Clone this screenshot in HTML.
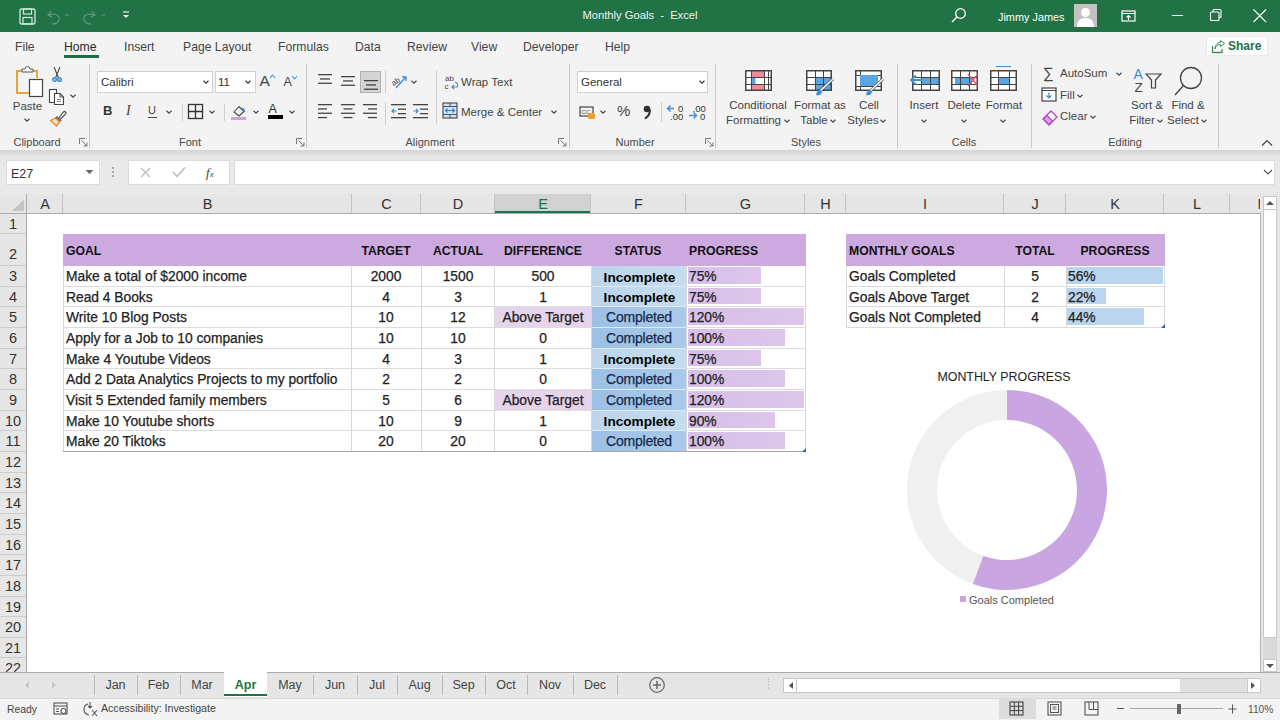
<!DOCTYPE html><html><head><meta charset="utf-8"><style>
*{margin:0;padding:0;box-sizing:border-box}
html,body{width:1280px;height:720px;overflow:hidden;background:#fff}
body{position:relative;font-family:"Liberation Sans",sans-serif}
.t{position:absolute;white-space:nowrap}
.d{-webkit-text-stroke:0.25px currentColor}
.b{position:absolute}

</style></head><body>
<div class="b" style="left:0px;top:0px;width:1280px;height:32px;background:#217346"></div>
<svg class="b" style="left:19px;top:8px;" width="18" height="17" viewBox="0 0 18 17"><rect x="1" y="1" width="15" height="15" rx="1.5" fill="none" stroke="#cfe8d9" stroke-width="1.3"/><rect x="4.5" y="1" width="8" height="5" fill="none" stroke="#cfe8d9" stroke-width="1.2"/><rect x="4" y="9.5" width="9" height="6.5" fill="none" stroke="#cfe8d9" stroke-width="1.2"/></svg>
<svg class="b" style="left:46px;top:8px;" width="30" height="17" viewBox="0 0 30 17"><path d="M5 3 L2 7 L6 9" fill="none" stroke="#5e9a78" stroke-width="1.2"/><path d="M2.5 7 C8 5 14 6 13 12 C12 15 9 16 6 16" fill="none" stroke="#5e9a78" stroke-width="1.2"/><path d="M19 7 L23 7" stroke="#5e9a78" stroke-width="1"/></svg>
<svg class="b" style="left:82px;top:8px;" width="30" height="17" viewBox="0 0 30 17"><path d="M10 3 L13 7 L9 9" fill="none" stroke="#5e9a78" stroke-width="1.2"/><path d="M12.5 7 C7 5 1 6 2 12 C3 15 6 16 9 16" fill="none" stroke="#5e9a78" stroke-width="1.2"/><path d="M19 7 L23 7" stroke="#5e9a78" stroke-width="1"/></svg>
<svg class="b" style="left:121px;top:10px;" width="10" height="10" viewBox="0 0 10 10"><path d="M2 2 H8" stroke="#e8f2ec" stroke-width="1.2"/><path d="M2 5 L5 8 L8 5 Z" fill="#e8f2ec"/></svg>
<div class="t " style="left:540.0px;width:200px;text-align:center;top:8.2px;font-size:11.2px;line-height:14.6px;color:#eef6f0;font-weight:400;">Monthly Goals&nbsp; -&nbsp; Excel</div>
<svg class="b" style="left:950px;top:7px;" width="18" height="17" viewBox="0 0 18 17"><circle cx="10.5" cy="6.5" r="4.8" fill="none" stroke="#fff" stroke-width="1.3"/><path d="M7 10 L2 15" stroke="#fff" stroke-width="1.4"/></svg>
<div class="t " style="left:998px;top:9.9px;font-size:10.9px;line-height:14.2px;color:#fff;font-weight:400;">Jimmy James</div>
<div class="b" style="left:1074px;top:4px;width:23px;height:23px;background:#c2c2c2"></div>
<svg class="b" style="left:1074px;top:4px;" width="23" height="23" viewBox="0 0 23 23"><circle cx="11.5" cy="8.5" r="4.5" fill="#fff"/><path d="M3 23 C3 15 8 14 11.5 14 C15 14 20 15 20 23 Z" fill="#fff"/></svg>
<svg class="b" style="left:1121px;top:9px;" width="16" height="14" viewBox="0 0 16 14"><rect x="1" y="2" width="13" height="10" fill="none" stroke="#fff" stroke-width="1.2"/><path d="M1 4.5 H14" stroke="#fff" stroke-width="1"/><path d="M7.5 11 V6.5 M5.5 8.5 L7.5 6.5 L9.5 8.5" fill="none" stroke="#fff" stroke-width="1.1"/></svg>
<div class="b" style="left:1172px;top:15px;width:11px;height:1.2px;background:#fff"></div>
<svg class="b" style="left:1209px;top:8px;" width="14" height="14" viewBox="0 0 14 14"><rect x="1.5" y="4" width="8.5" height="8.5" rx="1" fill="none" stroke="#fff" stroke-width="1.1"/><path d="M4 4 V2.5 Q4 1.5 5 1.5 H11 Q12 1.5 12 2.5 V8.5 Q12 9.5 11 9.5 H10" fill="none" stroke="#fff" stroke-width="1.1"/></svg>
<svg class="b" style="left:1253px;top:9px;" width="14" height="14" viewBox="0 0 14 14"><path d="M0.5 0.5 L13 13 M13 0.5 L0.5 13" stroke="#fff" stroke-width="1.1"/></svg>
<div class="b" style="left:0px;top:32px;width:1280px;height:118px;background:#f3f3f3"></div>
<div class="t " style="left:15px;top:39.6px;font-size:12.2px;line-height:15.9px;color:#444;font-weight:400;">File</div>
<div class="t " style="left:64px;top:39.6px;font-size:12.2px;line-height:15.9px;color:#262626;font-weight:400;">Home</div>
<div class="t " style="left:124px;top:39.6px;font-size:12.2px;line-height:15.9px;color:#444;font-weight:400;">Insert</div>
<div class="t " style="left:183px;top:39.6px;font-size:12.2px;line-height:15.9px;color:#444;font-weight:400;">Page Layout</div>
<div class="t " style="left:278px;top:39.6px;font-size:12.2px;line-height:15.9px;color:#444;font-weight:400;">Formulas</div>
<div class="t " style="left:355px;top:39.6px;font-size:12.2px;line-height:15.9px;color:#444;font-weight:400;">Data</div>
<div class="t " style="left:407px;top:39.6px;font-size:12.2px;line-height:15.9px;color:#444;font-weight:400;">Review</div>
<div class="t " style="left:471px;top:39.6px;font-size:12.2px;line-height:15.9px;color:#444;font-weight:400;">View</div>
<div class="t " style="left:523px;top:39.6px;font-size:12.2px;line-height:15.9px;color:#444;font-weight:400;">Developer</div>
<div class="t " style="left:605px;top:39.6px;font-size:12.2px;line-height:15.9px;color:#444;font-weight:400;">Help</div>
<div class="b" style="left:64px;top:55px;width:35px;height:3px;background:#1e6e42"></div>
<div class="b" style="left:1206px;top:36px;width:62px;height:20px;background:#fdfdfd;border:1px solid #ebebeb;border-radius:2px"></div>
<svg class="b" style="left:1211px;top:39px;" width="15" height="15" viewBox="0 0 15 15"><path d="M1.5 7 V13.5 H11 V10" fill="none" stroke="#3f8a60" stroke-width="1.3"/><path d="M4 10 C4.5 7 7 5.5 9.5 5.5 V7.5 L13.5 4.5 L9.5 1.5 V3.5 C6 3.5 4 6 4 10" fill="none" stroke="#3f8a60" stroke-width="1"/></svg>
<div class="t " style="left:1228px;top:38.7px;font-size:12px;line-height:15.6px;color:#24704a;font-weight:700;">Share</div>
<div class="b" style="left:89px;top:64px;width:1px;height:84px;background:#c8c8c8"></div>
<div class="b" style="left:306px;top:64px;width:1px;height:84px;background:#c8c8c8"></div>
<div class="b" style="left:569px;top:64px;width:1px;height:84px;background:#c8c8c8"></div>
<div class="b" style="left:715px;top:64px;width:1px;height:84px;background:#c8c8c8"></div>
<div class="b" style="left:897px;top:64px;width:1px;height:84px;background:#c8c8c8"></div>
<div class="b" style="left:1031px;top:64px;width:1px;height:84px;background:#c8c8c8"></div>
<div class="b" style="left:1218px;top:64px;width:1px;height:84px;background:#c8c8c8"></div>
<div class="t " style="left:-13.0px;width:100px;text-align:center;top:135.3px;font-size:11px;line-height:14.3px;color:#4a4a4a;font-weight:400;">Clipboard</div>
<div class="t " style="left:140.0px;width:100px;text-align:center;top:135.3px;font-size:11px;line-height:14.3px;color:#4a4a4a;font-weight:400;">Font</div>
<div class="t " style="left:380.0px;width:100px;text-align:center;top:135.3px;font-size:11px;line-height:14.3px;color:#4a4a4a;font-weight:400;">Alignment</div>
<div class="t " style="left:585.0px;width:100px;text-align:center;top:135.3px;font-size:11px;line-height:14.3px;color:#4a4a4a;font-weight:400;">Number</div>
<div class="t " style="left:756.0px;width:100px;text-align:center;top:135.3px;font-size:11px;line-height:14.3px;color:#4a4a4a;font-weight:400;">Styles</div>
<div class="t " style="left:914.0px;width:100px;text-align:center;top:135.3px;font-size:11px;line-height:14.3px;color:#4a4a4a;font-weight:400;">Cells</div>
<div class="t " style="left:1075.0px;width:100px;text-align:center;top:135.3px;font-size:11px;line-height:14.3px;color:#4a4a4a;font-weight:400;">Editing</div>
<svg class="b" style="left:79px;top:138px;" width="9" height="9" viewBox="0 0 9 9"><path d="M0.5 0.5 H6 M0.5 0.5 V6" stroke="#777" stroke-width="1"/><path d="M2.5 2.5 L8 8 M8 4.5 V8 H4.5" fill="none" stroke="#777" stroke-width="1"/></svg>
<svg class="b" style="left:296px;top:138px;" width="9" height="9" viewBox="0 0 9 9"><path d="M0.5 0.5 H6 M0.5 0.5 V6" stroke="#777" stroke-width="1"/><path d="M2.5 2.5 L8 8 M8 4.5 V8 H4.5" fill="none" stroke="#777" stroke-width="1"/></svg>
<svg class="b" style="left:558px;top:138px;" width="9" height="9" viewBox="0 0 9 9"><path d="M0.5 0.5 H6 M0.5 0.5 V6" stroke="#777" stroke-width="1"/><path d="M2.5 2.5 L8 8 M8 4.5 V8 H4.5" fill="none" stroke="#777" stroke-width="1"/></svg>
<svg class="b" style="left:705px;top:138px;" width="9" height="9" viewBox="0 0 9 9"><path d="M0.5 0.5 H6 M0.5 0.5 V6" stroke="#777" stroke-width="1"/><path d="M2.5 2.5 L8 8 M8 4.5 V8 H4.5" fill="none" stroke="#777" stroke-width="1"/></svg>
<svg class="b" style="left:1261px;top:139px;" width="12" height="8" viewBox="0 0 12 8"><path d="M1 6.5 L6 1.5 L11 6.5" fill="none" stroke="#444" stroke-width="1.2"/></svg>
<svg class="b" style="left:14px;top:66px;" width="30" height="32" viewBox="0 0 30 32"><path d="M3 5 H9 M19 5 H23 V12" fill="none" stroke="#e8a33d" stroke-width="2"/><path d="M3 4 V27 H15" fill="none" stroke="#e8a33d" stroke-width="2"/><path d="M8 6 V3 H11 Q11 0.5 13.5 0.5 Q16 0.5 16 3 H19 V6 Z" fill="#fff" stroke="#555" stroke-width="1"/><rect x="15.5" y="13.5" width="13" height="17" fill="#fff" stroke="#444" stroke-width="1.2"/></svg>
<div class="t " style="left:-2.5px;width:60px;text-align:center;top:99.0px;font-size:11.5px;line-height:15.0px;color:#444;font-weight:400;">Paste</div>
<svg class="b" style="left:23px;top:117px;" width="8" height="6" viewBox="0 0 8 6"><path d="M1.5 1.75 L4 4.25 L6.5 1.75" fill="none" stroke="#444" stroke-width="1.1"/></svg>
<svg class="b" style="left:50px;top:66px;" width="14" height="17" viewBox="0 0 14 17"><path d="M4 1 L8.5 12 M10 1 L5.5 12" stroke="#444" stroke-width="1.1"/><circle cx="4.5" cy="13.5" r="1.9" fill="#9cc8ec" stroke="#3a8fd6" stroke-width="1.3"/><circle cx="9.5" cy="13.5" r="1.9" fill="#9cc8ec" stroke="#3a8fd6" stroke-width="1.3"/></svg>
<svg class="b" style="left:48px;top:88px;" width="18" height="18" viewBox="0 0 18 18"><rect x="1.5" y="1.5" width="7" height="13" fill="#fff" stroke="#444" stroke-width="1.1"/><path d="M6.5 5.5 H12 L15.5 9 V16.5 H6.5 Z" fill="#fff" stroke="#444" stroke-width="1.1"/><path d="M12 5.5 V9 H15.5" fill="none" stroke="#444" stroke-width="0.9"/><path d="M9 11.5 H13 M9 13.5 H13" stroke="#777" stroke-width="0.9"/></svg>
<svg class="b" style="left:69px;top:93px;" width="8" height="6" viewBox="0 0 8 6"><path d="M1.5 1.75 L4 4.25 L6.5 1.75" fill="none" stroke="#444" stroke-width="1.1"/></svg>
<svg class="b" style="left:49px;top:109px;" width="18" height="18" viewBox="0 0 18 18"><path d="M9.5 9.5 L14.5 3 Q15.5 2 16.5 3 Q17.5 4 16.5 5 L11 10.5" fill="#fff" stroke="#555" stroke-width="1.2"/><path d="M8 7.5 L12 11.5 L10.5 13 L6.5 9 Z" fill="#777" stroke="#555" stroke-width="1"/><path d="M1.5 11.5 L6.5 9 L10.5 13 L7.5 17 Z" fill="#fbe2b8" stroke="#e8872a" stroke-width="1.3"/></svg>
<div class="b" style="left:97px;top:71px;width:116px;height:22px;background:#fff;border:1px solid #d0d0d0"></div>
<div class="t " style="left:101px;top:74.5px;font-size:11.5px;line-height:15.0px;color:#333;font-weight:400;">Calibri</div>
<svg class="b" style="left:202px;top:79px;" width="8" height="6" viewBox="0 0 8 6"><path d="M1.5 1.75 L4 4.25 L6.5 1.75" fill="none" stroke="#333" stroke-width="1.1"/></svg>
<div class="b" style="left:215px;top:71px;width:41px;height:22px;background:#fff;border:1px solid #d0d0d0"></div>
<div class="t " style="left:218px;top:74.5px;font-size:11.5px;line-height:15.0px;color:#333;font-weight:400;">11</div>
<svg class="b" style="left:244px;top:79px;" width="8" height="6" viewBox="0 0 8 6"><path d="M1.5 1.75 L4 4.25 L6.5 1.75" fill="none" stroke="#333" stroke-width="1.1"/></svg>
<div class="t " style="left:259.5px;top:70.9px;font-size:15.5px;line-height:20.2px;color:#444;font-weight:400;">A</div>
<svg class="b" style="left:269px;top:74px;" width="7" height="5" viewBox="0 0 7 5"><path d="M1 4 L3.5 1 L6 4" fill="none" stroke="#3a8fd6" stroke-width="1.1"/></svg>
<div class="t " style="left:283.5px;top:74.4px;font-size:12.5px;line-height:16.2px;color:#444;font-weight:400;">A</div>
<svg class="b" style="left:291px;top:75px;" width="7" height="5" viewBox="0 0 7 5"><path d="M1 1 L3.5 4 L6 1" fill="none" stroke="#3a8fd6" stroke-width="1.1"/></svg>
<div class="t " style="left:103px;top:102.5px;font-size:13px;line-height:16.9px;color:#333;font-weight:700;">B</div>
<div class="t " style="left:126px;top:101.9px;font-size:14px;line-height:18.2px;color:#444;font-weight:400;font-family:'Liberation Serif'"><i>I</i></div>
<div class="t " style="left:148px;top:103.3px;font-size:11px;line-height:14.3px;color:#444;font-weight:400;">U</div>
<div class="b" style="left:148px;top:117px;width:9px;height:1px;background:#444"></div>
<svg class="b" style="left:165px;top:109px;" width="8" height="6" viewBox="0 0 8 6"><path d="M1.5 1.75 L4 4.25 L6.5 1.75" fill="none" stroke="#444" stroke-width="1.1"/></svg>
<div class="b" style="left:182px;top:104px;width:1px;height:17px;background:#d0d0d0"></div>
<svg class="b" style="left:187px;top:103px;" width="17" height="17" viewBox="0 0 17 17"><rect x="1.5" y="1.5" width="14" height="14" fill="none" stroke="#333" stroke-width="1.3"/><path d="M8.5 1.5 V15.5 M1.5 8.5 H15.5" stroke="#333" stroke-width="1.3"/></svg>
<svg class="b" style="left:208px;top:109px;" width="8" height="6" viewBox="0 0 8 6"><path d="M1.5 1.75 L4 4.25 L6.5 1.75" fill="none" stroke="#444" stroke-width="1.1"/></svg>
<div class="b" style="left:224px;top:104px;width:1px;height:17px;background:#d0d0d0"></div>
<svg class="b" style="left:230px;top:103px;" width="18" height="18" viewBox="0 0 18 18"><path d="M4 9 L9 3.5 L14 8.5 L9 13 Z" fill="none" stroke="#444" stroke-width="1.1"/><path d="M12 5 Q15 6 14 9" fill="none" stroke="#3a8fd6" stroke-width="1.3"/><rect x="1" y="14" width="15" height="3" fill="#c9a5e0"/></svg>
<svg class="b" style="left:252px;top:109px;" width="8" height="6" viewBox="0 0 8 6"><path d="M1.5 1.75 L4 4.25 L6.5 1.75" fill="none" stroke="#444" stroke-width="1.1"/></svg>
<div class="t " style="left:268.5px;top:101.4px;font-size:12.5px;line-height:16.2px;color:#333;font-weight:400;">A</div>
<div class="b" style="left:268px;top:115px;width:15px;height:3.5px;background:#000"></div>
<svg class="b" style="left:288px;top:109px;" width="8" height="6" viewBox="0 0 8 6"><path d="M1.5 1.75 L4 4.25 L6.5 1.75" fill="none" stroke="#444" stroke-width="1.1"/></svg>
<svg class="b" style="left:318px;top:74px;" width="14" height="14" viewBox="0 0 14 14"><rect x="0.0" y="0.0" width="14" height="1.3" fill="#444"/><rect x="2.0" y="4.3" width="10" height="1.3" fill="#444"/><rect x="0.0" y="8.6" width="14" height="1.3" fill="#444"/></svg>
<svg class="b" style="left:341px;top:76px;" width="14" height="14" viewBox="0 0 14 14"><rect x="0.0" y="0.0" width="14" height="1.3" fill="#444"/><rect x="2.0" y="4.3" width="10" height="1.3" fill="#444"/><rect x="0.0" y="8.6" width="14" height="1.3" fill="#444"/></svg>
<div class="b" style="left:360px;top:71px;width:21px;height:22px;background:#d4d4d4;border:1px solid #b0b0b0"></div>
<svg class="b" style="left:364px;top:80px;" width="14" height="14" viewBox="0 0 14 14"><rect x="0.0" y="0.0" width="14" height="1.3" fill="#444"/><rect x="2.0" y="4.3" width="10" height="1.3" fill="#444"/><rect x="0.0" y="8.6" width="14" height="1.3" fill="#444"/></svg>
<div class="b" style="left:385px;top:70px;width:1px;height:23px;background:#d0d0d0"></div>
<svg class="b" style="left:390px;top:73px;" width="20" height="17" viewBox="0 0 20 17"><text x="1" y="11" font-size="8" font-family="Liberation Sans" fill="#444" transform="rotate(-35 6 8)">ab</text><path d="M6 15 L16 4 M12 4 H16 V8" fill="none" stroke="#3a8fd6" stroke-width="1.3"/></svg>
<svg class="b" style="left:410px;top:79px;" width="8" height="6" viewBox="0 0 8 6"><path d="M1.5 1.75 L4 4.25 L6.5 1.75" fill="none" stroke="#444" stroke-width="1.1"/></svg>
<div class="b" style="left:436px;top:70px;width:1px;height:54px;background:#d0d0d0"></div>
<svg class="b" style="left:444px;top:73px;" width="17" height="17" viewBox="0 0 17 17"><text x="1" y="8" font-size="8" font-family="Liberation Sans" fill="#444">ab</text><text x="0.5" y="16" font-size="8" font-family="Liberation Sans" fill="#444">c</text><path d="M11 9 Q15 10 13 14 L8 14 M10 12 L8 14 L10 16" fill="none" stroke="#3a8fd6" stroke-width="1.2"/></svg>
<div class="t " style="left:461px;top:74.5px;font-size:11.5px;line-height:15.0px;color:#444;font-weight:400;">Wrap Text</div>
<svg class="b" style="left:318px;top:104px;" width="14" height="19" viewBox="0 0 14 19"><rect x="0" y="0.0" width="14" height="1.3" fill="#444"/><rect x="0" y="4.3" width="9" height="1.3" fill="#444"/><rect x="0" y="8.6" width="14" height="1.3" fill="#444"/><rect x="0" y="12.899999999999999" width="9" height="1.3" fill="#444"/></svg>
<svg class="b" style="left:341px;top:104px;" width="14" height="19" viewBox="0 0 14 19"><rect x="0.0" y="0.0" width="14" height="1.3" fill="#444"/><rect x="2.5" y="4.3" width="9" height="1.3" fill="#444"/><rect x="0.0" y="8.6" width="14" height="1.3" fill="#444"/><rect x="2.5" y="12.899999999999999" width="9" height="1.3" fill="#444"/></svg>
<svg class="b" style="left:363px;top:104px;" width="14" height="19" viewBox="0 0 14 19"><rect x="0" y="0.0" width="14" height="1.3" fill="#444"/><rect x="5" y="4.3" width="9" height="1.3" fill="#444"/><rect x="0" y="8.6" width="14" height="1.3" fill="#444"/><rect x="5" y="12.899999999999999" width="9" height="1.3" fill="#444"/></svg>
<div class="b" style="left:385px;top:102px;width:1px;height:23px;background:#d0d0d0"></div>
<svg class="b" style="left:391px;top:103px;" width="16" height="16" viewBox="0 0 16 16"><rect x="0" y="1" width="15" height="1.3" fill="#444"/><rect x="7" y="5.5" width="8" height="1.3" fill="#444"/><rect x="7" y="10" width="8" height="1.3" fill="#444"/><rect x="0" y="14" width="15" height="1.3" fill="#444"/><path d="M5.5 8 H1 M3 6 L1 8 L3 10" fill="none" stroke="#3a8fd6" stroke-width="1.2"/></svg>
<svg class="b" style="left:413px;top:103px;" width="16" height="16" viewBox="0 0 16 16"><rect x="0" y="1" width="15" height="1.3" fill="#444"/><rect x="7" y="5.5" width="8" height="1.3" fill="#444"/><rect x="7" y="10" width="8" height="1.3" fill="#444"/><rect x="0" y="14" width="15" height="1.3" fill="#444"/><path d="M0.5 8 H5 M3 6 L5 8 L3 10" fill="none" stroke="#3a8fd6" stroke-width="1.2"/></svg>
<svg class="b" style="left:442px;top:102px;" width="17" height="17" viewBox="0 0 17 17"><rect x="1" y="1" width="14" height="15" fill="#cfe3f6" stroke="#444" stroke-width="1.1"/><path d="M1 4.5 H15 M1 12.5 H15 M8 1 V4.5 M8 12.5 V16" stroke="#444" stroke-width="0.9"/><path d="M3.5 8.5 H12.5 M5.5 6.5 L3.5 8.5 L5.5 10.5 M10.5 6.5 L12.5 8.5 L10.5 10.5" fill="none" stroke="#2a7fd0" stroke-width="1.1"/></svg>
<div class="t " style="left:461px;top:104.5px;font-size:11.5px;line-height:15.0px;color:#444;font-weight:400;">Merge &amp; Center</div>
<svg class="b" style="left:550px;top:109px;" width="8" height="6" viewBox="0 0 8 6"><path d="M1.5 1.75 L4 4.25 L6.5 1.75" fill="none" stroke="#444" stroke-width="1.1"/></svg>
<div class="b" style="left:577px;top:71px;width:131px;height:22px;background:#fff;border:1px solid #d0d0d0"></div>
<div class="t " style="left:581px;top:74.5px;font-size:11.5px;line-height:15.0px;color:#333;font-weight:400;">General</div>
<svg class="b" style="left:698px;top:79px;" width="8" height="6" viewBox="0 0 8 6"><path d="M1.5 1.75 L4 4.25 L6.5 1.75" fill="none" stroke="#333" stroke-width="1.1"/></svg>
<svg class="b" style="left:579px;top:105px;" width="18" height="15" viewBox="0 0 18 15"><rect x="1" y="2" width="13" height="9" fill="none" stroke="#444" stroke-width="1.2"/><text x="2.5" y="9" font-size="6" font-family="Liberation Sans" fill="#444">CC</text><rect x="9" y="8" width="7" height="6" rx="1" fill="#f0a030"/></svg>
<svg class="b" style="left:599px;top:109px;" width="8" height="6" viewBox="0 0 8 6"><path d="M1.5 1.75 L4 4.25 L6.5 1.75" fill="none" stroke="#444" stroke-width="1.1"/></svg>
<div class="t " style="left:617px;top:101.2px;font-size:15px;line-height:19.5px;color:#444;font-weight:400;">%</div>
<svg class="b" style="left:642px;top:104px;" width="11" height="16" viewBox="0 0 11 16"><circle cx="5" cy="5" r="3.3" fill="#333"/><path d="M7.8 5.5 Q8.5 11 3 14.5" fill="none" stroke="#333" stroke-width="2.2"/></svg>
<div class="b" style="left:661px;top:102px;width:1px;height:20px;background:#d0d0d0"></div>
<svg class="b" style="left:666px;top:103px;" width="20" height="18" viewBox="0 0 20 18"><path d="M8 5.5 H1.5 M4.5 2.5 L1.5 5.5 L4.5 8.5" fill="none" stroke="#3a8fd6" stroke-width="1.4"/><text x="12" y="9" font-size="9.5" font-family="Liberation Sans" fill="#333">0</text><text x="4" y="17" font-size="9.5" font-family="Liberation Sans" fill="#333">.00</text></svg>
<svg class="b" style="left:688px;top:103px;" width="20" height="18" viewBox="0 0 20 18"><text x="4.5" y="9" font-size="9.5" font-family="Liberation Sans" fill="#333">.00</text><path d="M1 12.5 H8.5 M5.5 9.5 L8.5 12.5 L5.5 15.5" fill="none" stroke="#3a8fd6" stroke-width="1.4"/><text x="12" y="17" font-size="9.5" font-family="Liberation Sans" fill="#333">0</text></svg>
<svg class="b" style="left:745px;top:70px;" width="27" height="21" viewBox="0 0 27 21"><rect x="0.6" y="0.6" width="25.8" height="19.8" fill="#fff"/><rect x="6" y="0.6" width="13" height="6.4" fill="#f08a96"/><rect x="6" y="7" width="4.5" height="7" fill="#5aa5e6"/><rect x="6" y="14" width="13" height="6.4" fill="#f08a96"/><path d="M6.5 0.5 V20.5" stroke="#444" stroke-width="1"/><path d="M19.5 0.5 V20.5" stroke="#444" stroke-width="1"/><path d="M23.5 0.5 V20.5" stroke="#444" stroke-width="1"/><path d="M0.5 7.5 H26.5" stroke="#444" stroke-width="1"/><path d="M0.5 14.5 H26.5" stroke="#444" stroke-width="1"/><rect x="0.75" y="0.75" width="25.5" height="19.5" fill="none" stroke="#444" stroke-width="1.5"/></svg>
<div class="t " style="left:708.0px;width:100px;text-align:center;top:97.5px;font-size:11.5px;line-height:15.0px;color:#444;font-weight:400;">Conditional</div>
<div class="t " style="left:703.5px;width:100px;text-align:center;top:112.5px;font-size:11.5px;line-height:15.0px;color:#444;font-weight:400;">Formatting</div>
<svg class="b" style="left:783px;top:118px;" width="8" height="6" viewBox="0 0 8 6"><path d="M1.5 1.75 L4 4.25 L6.5 1.75" fill="none" stroke="#444" stroke-width="1.1"/></svg>
<svg class="b" style="left:806px;top:70px;" width="26" height="21" viewBox="0 0 26 21"><rect x="0.6" y="0.6" width="24.8" height="19.8" fill="#fff"/><rect x="9" y="7" width="16" height="13" fill="#5aa5e6"/><path d="M9.5 0.5 V20.5" stroke="#444" stroke-width="1"/><path d="M17.5 0.5 V20.5" stroke="#444" stroke-width="1"/><path d="M0.5 7.5 H25.5" stroke="#444" stroke-width="1"/><path d="M0.5 14.5 H25.5" stroke="#444" stroke-width="1"/><rect x="0.75" y="0.75" width="24.5" height="19.5" fill="none" stroke="#444" stroke-width="1.5"/></svg>
<svg class="b" style="left:816px;top:77px;" width="20" height="19" viewBox="0 0 20 19"><path d="M3 15 L17 2" stroke="#555" stroke-width="3"/><path d="M3 15 L17 2" stroke="#fff" stroke-width="1.6"/><path d="M0 18 Q1 13 4 13 Q7 14 5 17 Q3 19 0 18 Z" fill="#3a8fd6"/></svg>
<div class="t " style="left:770.0px;width:100px;text-align:center;top:97.5px;font-size:11.5px;line-height:15.0px;color:#444;font-weight:400;">Format as</div>
<div class="t " style="left:784.0px;width:60px;text-align:center;top:112.5px;font-size:11.5px;line-height:15.0px;color:#444;font-weight:400;">Table</div>
<svg class="b" style="left:829px;top:118px;" width="8" height="6" viewBox="0 0 8 6"><path d="M1.5 1.75 L4 4.25 L6.5 1.75" fill="none" stroke="#444" stroke-width="1.1"/></svg>
<svg class="b" style="left:855px;top:70px;" width="27" height="21" viewBox="0 0 27 21"><rect x="0.6" y="0.6" width="25.8" height="19.8" fill="#fff"/><path d="M5.5 0.5 V20.5" stroke="#444" stroke-width="1"/><path d="M0.5 5.5 H26.5" stroke="#444" stroke-width="1"/><path d="M0.5 16.5 H26.5" stroke="#444" stroke-width="1"/><rect x="0.75" y="0.75" width="25.5" height="19.5" fill="none" stroke="#444" stroke-width="1.5"/></svg>
<div class="b" style="left:860px;top:75px;width:18px;height:11px;background:#5aa5e6"></div>
<svg class="b" style="left:866px;top:77px;" width="20" height="19" viewBox="0 0 20 19"><path d="M3 15 L17 2" stroke="#555" stroke-width="3"/><path d="M3 15 L17 2" stroke="#fff" stroke-width="1.6"/><path d="M0 18 Q1 13 4 13 Q7 14 5 17 Q3 19 0 18 Z" fill="#3a8fd6"/></svg>
<div class="t " style="left:839.0px;width:60px;text-align:center;top:97.5px;font-size:11.5px;line-height:15.0px;color:#444;font-weight:400;">Cell</div>
<div class="t " style="left:833.0px;width:60px;text-align:center;top:112.5px;font-size:11.5px;line-height:15.0px;color:#444;font-weight:400;">Styles</div>
<svg class="b" style="left:879px;top:118px;" width="8" height="6" viewBox="0 0 8 6"><path d="M1.5 1.75 L4 4.25 L6.5 1.75" fill="none" stroke="#444" stroke-width="1.1"/></svg>
<svg class="b" style="left:912px;top:70px;" width="28" height="21" viewBox="0 0 28 21"><rect x="0.6" y="0.6" width="26.8" height="19.8" fill="#fff"/><rect x="9" y="7" width="19" height="7" fill="#5aa5e6"/><path d="M9.5 0.5 V20.5" stroke="#444" stroke-width="1"/><path d="M18.5 0.5 V20.5" stroke="#444" stroke-width="1"/><path d="M0.5 7.5 H27.5" stroke="#444" stroke-width="1"/><path d="M0.5 14.5 H27.5" stroke="#444" stroke-width="1"/><rect x="0.75" y="0.75" width="26.5" height="19.5" fill="none" stroke="#444" stroke-width="1.5"/></svg>
<svg class="b" style="left:909px;top:73px;" width="15" height="14" viewBox="0 0 15 14"><path d="M13 7 H3 M7 2.5 L2 7 L7 11.5" fill="none" stroke="#3a8fd6" stroke-width="1.8"/></svg>
<div class="t " style="left:894.0px;width:60px;text-align:center;top:97.5px;font-size:11.5px;line-height:15.0px;color:#444;font-weight:400;">Insert</div>
<svg class="b" style="left:920px;top:118px;" width="8" height="6" viewBox="0 0 8 6"><path d="M1.5 1.75 L4 4.25 L6.5 1.75" fill="none" stroke="#444" stroke-width="1.1"/></svg>
<svg class="b" style="left:951px;top:70px;" width="27" height="21" viewBox="0 0 27 21"><rect x="0.6" y="0.6" width="25.8" height="19.8" fill="#fff"/><rect x="4" y="7" width="17" height="7" fill="#5aa5e6"/><path d="M9.5 0.5 V20.5" stroke="#444" stroke-width="1"/><path d="M18.5 0.5 V20.5" stroke="#444" stroke-width="1"/><path d="M0.5 7.5 H26.5" stroke="#444" stroke-width="1"/><path d="M0.5 14.5 H26.5" stroke="#444" stroke-width="1"/><rect x="0.75" y="0.75" width="25.5" height="19.5" fill="none" stroke="#444" stroke-width="1.5"/></svg>
<svg class="b" style="left:966px;top:72px;" width="14" height="17" viewBox="0 0 14 17"><path d="M2 2 L12 14 M12 2 L2 14" stroke="#e0505a" stroke-width="1.3"/></svg>
<div class="t " style="left:934.0px;width:60px;text-align:center;top:97.5px;font-size:11.5px;line-height:15.0px;color:#444;font-weight:400;">Delete</div>
<svg class="b" style="left:960px;top:118px;" width="8" height="6" viewBox="0 0 8 6"><path d="M1.5 1.75 L4 4.25 L6.5 1.75" fill="none" stroke="#444" stroke-width="1.1"/></svg>
<svg class="b" style="left:990px;top:70px;" width="27" height="21" viewBox="0 0 27 21"><rect x="0.6" y="0.6" width="25.8" height="19.8" fill="#fff"/><rect x="8" y="7" width="11" height="7" fill="#5aa5e6"/><path d="M8.5 0.5 V20.5" stroke="#444" stroke-width="1"/><path d="M19.5 0.5 V20.5" stroke="#444" stroke-width="1"/><path d="M0.5 7.5 H26.5" stroke="#444" stroke-width="1"/><path d="M0.5 14.5 H26.5" stroke="#444" stroke-width="1"/><rect x="0.75" y="0.75" width="25.5" height="19.5" fill="none" stroke="#444" stroke-width="1.5"/></svg>
<div class="b" style="left:996px;top:66px;width:15px;height:1.3px;background:#3a8fd6"></div>
<div class="t " style="left:974.0px;width:60px;text-align:center;top:97.5px;font-size:11.5px;line-height:15.0px;color:#444;font-weight:400;">Format</div>
<svg class="b" style="left:999px;top:118px;" width="8" height="6" viewBox="0 0 8 6"><path d="M1.5 1.75 L4 4.25 L6.5 1.75" fill="none" stroke="#444" stroke-width="1.1"/></svg>
<div class="t " style="left:1043px;top:63.2px;font-size:15px;line-height:19.5px;color:#444;font-weight:400;">&#x2211;</div>
<div class="t " style="left:1060px;top:65.5px;font-size:11.5px;line-height:15.0px;color:#444;font-weight:400;">AutoSum</div>
<svg class="b" style="left:1115px;top:71px;" width="8" height="6" viewBox="0 0 8 6"><path d="M1.5 1.75 L4 4.25 L6.5 1.75" fill="none" stroke="#444" stroke-width="1.1"/></svg>
<svg class="b" style="left:1041px;top:87px;" width="17" height="16" viewBox="0 0 17 16"><rect x="1" y="1" width="14" height="13" fill="#fff" stroke="#444" stroke-width="1.2"/><path d="M1 3.5 H15" stroke="#444" stroke-width="1"/><path d="M8 5.5 V11 M5.5 8.5 L8 11 L10.5 8.5" fill="none" stroke="#3a8fd6" stroke-width="1.2"/></svg>
<div class="t " style="left:1060px;top:87.5px;font-size:11.5px;line-height:15.0px;color:#444;font-weight:400;">Fill</div>
<svg class="b" style="left:1076px;top:93px;" width="8" height="6" viewBox="0 0 8 6"><path d="M1.5 1.75 L4 4.25 L6.5 1.75" fill="none" stroke="#444" stroke-width="1.1"/></svg>
<svg class="b" style="left:1041px;top:108px;" width="18" height="18" viewBox="0 0 18 18"><path d="M2 11 L10 3 L16 9 L8 17 Z" fill="none" stroke="#b548c6" stroke-width="1.3"/><path d="M2.5 11 L6 7.5 L11.5 13 L8 16.5 Z" fill="#e0a0ea" stroke="#b548c6" stroke-width="1.1"/></svg>
<div class="t " style="left:1060px;top:108.5px;font-size:11.5px;line-height:15.0px;color:#444;font-weight:400;">Clear</div>
<svg class="b" style="left:1089px;top:114px;" width="8" height="6" viewBox="0 0 8 6"><path d="M1.5 1.75 L4 4.25 L6.5 1.75" fill="none" stroke="#444" stroke-width="1.1"/></svg>
<div class="t " style="left:1133.5px;top:64.9px;font-size:14px;line-height:18.2px;color:#3a8fd6;font-weight:400;">A</div>
<div class="t " style="left:1134.5px;top:78.7px;font-size:13.5px;line-height:17.6px;color:#444;font-weight:400;">Z</div>
<svg class="b" style="left:1145px;top:73px;" width="18" height="17" viewBox="0 0 18 17"><path d="M1 1 H16 L10.5 7 V15 H6.5 V7 Z" fill="none" stroke="#444" stroke-width="1.2"/></svg>
<div class="t " style="left:1117.0px;width:60px;text-align:center;top:97.5px;font-size:11.5px;line-height:15.0px;color:#444;font-weight:400;">Sort &amp;</div>
<div class="t " style="left:1112.0px;width:60px;text-align:center;top:112.5px;font-size:11.5px;line-height:15.0px;color:#444;font-weight:400;">Filter</div>
<svg class="b" style="left:1156px;top:118px;" width="8" height="6" viewBox="0 0 8 6"><path d="M1.5 1.75 L4 4.25 L6.5 1.75" fill="none" stroke="#444" stroke-width="1.1"/></svg>
<svg class="b" style="left:1173px;top:66px;" width="32" height="31" viewBox="0 0 32 31"><circle cx="18" cy="12" r="10.5" fill="none" stroke="#444" stroke-width="1.3"/><path d="M10.5 19.5 L2 29" stroke="#444" stroke-width="1.4"/></svg>
<div class="t " style="left:1158.0px;width:60px;text-align:center;top:97.5px;font-size:11.5px;line-height:15.0px;color:#444;font-weight:400;">Find &amp;</div>
<div class="t " style="left:1153.0px;width:60px;text-align:center;top:112.5px;font-size:11.5px;line-height:15.0px;color:#444;font-weight:400;">Select</div>
<svg class="b" style="left:1200px;top:118px;" width="8" height="6" viewBox="0 0 8 6"><path d="M1.5 1.75 L4 4.25 L6.5 1.75" fill="none" stroke="#444" stroke-width="1.1"/></svg>
<div class="b" style="left:0px;top:150px;width:1280px;height:44px;background:#e9e9e9"></div>
<div class="b" style="left:0px;top:150px;width:1280px;height:7px;background:linear-gradient(180deg,#d4d4d4,#e9e9e9)"></div>
<div class="b" style="left:6px;top:160px;width:94px;height:25px;background:#fff;border:1px solid #dcdcdc"></div>
<div class="t " style="left:11px;top:165.9px;font-size:12.5px;line-height:16.2px;color:#333;font-weight:400;">E27</div>
<svg class="b" style="left:85px;top:169px;" width="9" height="6" viewBox="0 0 9 6"><path d="M0.5 1 H8.5 L4.5 5 Z" fill="#666"/></svg>
<svg class="b" style="left:111px;top:166px;" width="4" height="14" viewBox="0 0 4 14"><circle cx="2" cy="2" r="0.9" fill="#888"/><circle cx="2" cy="6" r="0.9" fill="#888"/><circle cx="2" cy="10" r="0.9" fill="#888"/></svg>
<div class="b" style="left:128px;top:160px;width:102px;height:25px;background:#fff;border:1px solid #dcdcdc"></div>
<svg class="b" style="left:140px;top:167px;" width="11" height="11" viewBox="0 0 11 11"><path d="M1 1 L10 10 M10 1 L1 10" stroke="#b8b8b8" stroke-width="1.2"/></svg>
<svg class="b" style="left:172px;top:166px;" width="14" height="12" viewBox="0 0 14 12"><path d="M1 6 L5 10.5 L13 1.5" fill="none" stroke="#b8b8b8" stroke-width="1.3"/></svg>
<div class="t " style="left:206px;top:164.6px;font-size:13px;line-height:16.9px;color:#444;font-weight:400;font-family:'Liberation Serif'"><i>f</i><span style="font-size:9px"><i>x</i></span></div>
<div class="b" style="left:234px;top:160px;width:1041px;height:25px;background:#fff;border:1px solid #dcdcdc"></div>
<svg class="b" style="left:1263px;top:169px;" width="10" height="7" viewBox="0 0 10 7"><path d="M1 1 L5 5 L9 1" fill="none" stroke="#555" stroke-width="1.2"/></svg>
<div class="b" style="left:0px;top:194px;width:1262px;height:19px;background:#e6e6e6"></div>
<div class="b" style="left:0px;top:213px;width:27px;height:459px;background:#e6e6e6"></div>
<div class="b" style="left:27px;top:213px;width:1234px;height:459px;background:#fff"></div>
<div class="b" style="left:0px;top:213px;width:1261px;height:1px;background:#ababab"></div>
<div class="b" style="left:26px;top:194px;width:1px;height:478px;background:#ababab"></div>
<svg class="b" style="left:9px;top:199px;" width="16" height="13" viewBox="0 0 16 13"><path d="M15 0.5 V12 H3 Z" fill="#c4c4c4"/></svg>
<div class="b" style="left:0;top:0;width:1260px;height:720px;overflow:hidden">
<div class="b" style="left:62px;top:194px;width:1px;height:19px;background:#c4c4c4"></div>
<div class="t " style="left:25.0px;width:40px;text-align:center;top:194.6px;font-size:14.5px;line-height:18.9px;color:#333;font-weight:400;">A</div>
<div class="b" style="left:351px;top:194px;width:1px;height:19px;background:#c4c4c4"></div>
<div class="t " style="left:187.5px;width:40px;text-align:center;top:194.6px;font-size:14.5px;line-height:18.9px;color:#333;font-weight:400;">B</div>
<div class="b" style="left:420px;top:194px;width:1px;height:19px;background:#c4c4c4"></div>
<div class="t " style="left:366.5px;width:40px;text-align:center;top:194.6px;font-size:14.5px;line-height:18.9px;color:#333;font-weight:400;">C</div>
<div class="b" style="left:494px;top:194px;width:1px;height:19px;background:#c4c4c4"></div>
<div class="t " style="left:438.0px;width:40px;text-align:center;top:194.6px;font-size:14.5px;line-height:18.9px;color:#333;font-weight:400;">D</div>
<div class="b" style="left:495px;top:194px;width:96px;height:19px;background:#d2d2d2"></div>
<div class="b" style="left:495px;top:211px;width:96px;height:2px;background:#217346"></div>
<div class="b" style="left:590px;top:194px;width:1px;height:19px;background:#c4c4c4"></div>
<div class="t " style="left:523.0px;width:40px;text-align:center;top:194.6px;font-size:14.5px;line-height:18.9px;color:#217346;font-weight:400;">E</div>
<div class="b" style="left:685px;top:194px;width:1px;height:19px;background:#c4c4c4"></div>
<div class="t " style="left:618.5px;width:40px;text-align:center;top:194.6px;font-size:14.5px;line-height:18.9px;color:#333;font-weight:400;">F</div>
<div class="b" style="left:804px;top:194px;width:1px;height:19px;background:#c4c4c4"></div>
<div class="t " style="left:725.5px;width:40px;text-align:center;top:194.6px;font-size:14.5px;line-height:18.9px;color:#333;font-weight:400;">G</div>
<div class="b" style="left:845px;top:194px;width:1px;height:19px;background:#c4c4c4"></div>
<div class="t " style="left:805.5px;width:40px;text-align:center;top:194.6px;font-size:14.5px;line-height:18.9px;color:#333;font-weight:400;">H</div>
<div class="b" style="left:1003px;top:194px;width:1px;height:19px;background:#c4c4c4"></div>
<div class="t " style="left:905.0px;width:40px;text-align:center;top:194.6px;font-size:14.5px;line-height:18.9px;color:#333;font-weight:400;">I</div>
<div class="b" style="left:1065px;top:194px;width:1px;height:19px;background:#c4c4c4"></div>
<div class="t " style="left:1015.0px;width:40px;text-align:center;top:194.6px;font-size:14.5px;line-height:18.9px;color:#333;font-weight:400;">J</div>
<div class="b" style="left:1163px;top:194px;width:1px;height:19px;background:#c4c4c4"></div>
<div class="t " style="left:1095.0px;width:40px;text-align:center;top:194.6px;font-size:14.5px;line-height:18.9px;color:#333;font-weight:400;">K</div>
<div class="b" style="left:1229px;top:194px;width:1px;height:19px;background:#c4c4c4"></div>
<div class="t " style="left:1177.0px;width:40px;text-align:center;top:194.6px;font-size:14.5px;line-height:18.9px;color:#333;font-weight:400;">L</div>
<div class="b" style="left:1296px;top:194px;width:1px;height:19px;background:#c4c4c4"></div>
<div class="t " style="left:1243.5px;width:40px;text-align:center;top:194.6px;font-size:14.5px;line-height:18.9px;color:#333;font-weight:400;">M</div>
</div>
<div class="b" style="left:0px;top:233px;width:26px;height:1px;background:#cdcdcd"></div>
<div class="t " style="left:0.0px;width:26px;text-align:center;top:214.6px;font-size:14.5px;line-height:18.9px;color:#333;font-weight:400;">1</div>
<div class="b" style="left:0px;top:265px;width:26px;height:1px;background:#cdcdcd"></div>
<div class="t " style="left:0.0px;width:26px;text-align:center;top:244.6px;font-size:14.5px;line-height:18.9px;color:#333;font-weight:400;">2</div>
<div class="b" style="left:0px;top:286px;width:26px;height:1px;background:#cdcdcd"></div>
<div class="t " style="left:0.0px;width:26px;text-align:center;top:267.1px;font-size:14.5px;line-height:18.9px;color:#333;font-weight:400;">3</div>
<div class="b" style="left:0px;top:306px;width:26px;height:1px;background:#cdcdcd"></div>
<div class="t " style="left:0.0px;width:26px;text-align:center;top:287.6px;font-size:14.5px;line-height:18.9px;color:#333;font-weight:400;">4</div>
<div class="b" style="left:0px;top:327px;width:26px;height:1px;background:#cdcdcd"></div>
<div class="t " style="left:0.0px;width:26px;text-align:center;top:308.1px;font-size:14.5px;line-height:18.9px;color:#333;font-weight:400;">5</div>
<div class="b" style="left:0px;top:348px;width:26px;height:1px;background:#cdcdcd"></div>
<div class="t " style="left:0.0px;width:26px;text-align:center;top:329.1px;font-size:14.5px;line-height:18.9px;color:#333;font-weight:400;">6</div>
<div class="b" style="left:0px;top:368px;width:26px;height:1px;background:#cdcdcd"></div>
<div class="t " style="left:0.0px;width:26px;text-align:center;top:349.6px;font-size:14.5px;line-height:18.9px;color:#333;font-weight:400;">7</div>
<div class="b" style="left:0px;top:389px;width:26px;height:1px;background:#cdcdcd"></div>
<div class="t " style="left:0.0px;width:26px;text-align:center;top:370.1px;font-size:14.5px;line-height:18.9px;color:#333;font-weight:400;">8</div>
<div class="b" style="left:0px;top:410px;width:26px;height:1px;background:#cdcdcd"></div>
<div class="t " style="left:0.0px;width:26px;text-align:center;top:391.1px;font-size:14.5px;line-height:18.9px;color:#333;font-weight:400;">9</div>
<div class="b" style="left:0px;top:430px;width:26px;height:1px;background:#cdcdcd"></div>
<div class="t " style="left:0.0px;width:26px;text-align:center;top:411.6px;font-size:14.5px;line-height:18.9px;color:#333;font-weight:400;">10</div>
<div class="b" style="left:0px;top:451px;width:26px;height:1px;background:#cdcdcd"></div>
<div class="t " style="left:0.0px;width:26px;text-align:center;top:432.1px;font-size:14.5px;line-height:18.9px;color:#333;font-weight:400;">11</div>
<div class="b" style="left:0px;top:472px;width:26px;height:1px;background:#cdcdcd"></div>
<div class="t " style="left:0.0px;width:26px;text-align:center;top:453.1px;font-size:14.5px;line-height:18.9px;color:#333;font-weight:400;">12</div>
<div class="b" style="left:0px;top:492px;width:26px;height:1px;background:#cdcdcd"></div>
<div class="t " style="left:0.0px;width:26px;text-align:center;top:473.6px;font-size:14.5px;line-height:18.9px;color:#333;font-weight:400;">13</div>
<div class="b" style="left:0px;top:513px;width:26px;height:1px;background:#cdcdcd"></div>
<div class="t " style="left:0.0px;width:26px;text-align:center;top:494.1px;font-size:14.5px;line-height:18.9px;color:#333;font-weight:400;">14</div>
<div class="b" style="left:0px;top:534px;width:26px;height:1px;background:#cdcdcd"></div>
<div class="t " style="left:0.0px;width:26px;text-align:center;top:515.1px;font-size:14.5px;line-height:18.9px;color:#333;font-weight:400;">15</div>
<div class="b" style="left:0px;top:554px;width:26px;height:1px;background:#cdcdcd"></div>
<div class="t " style="left:0.0px;width:26px;text-align:center;top:535.6px;font-size:14.5px;line-height:18.9px;color:#333;font-weight:400;">16</div>
<div class="b" style="left:0px;top:575px;width:26px;height:1px;background:#cdcdcd"></div>
<div class="t " style="left:0.0px;width:26px;text-align:center;top:556.1px;font-size:14.5px;line-height:18.9px;color:#333;font-weight:400;">17</div>
<div class="b" style="left:0px;top:596px;width:26px;height:1px;background:#cdcdcd"></div>
<div class="t " style="left:0.0px;width:26px;text-align:center;top:577.1px;font-size:14.5px;line-height:18.9px;color:#333;font-weight:400;">18</div>
<div class="b" style="left:0px;top:616px;width:26px;height:1px;background:#cdcdcd"></div>
<div class="t " style="left:0.0px;width:26px;text-align:center;top:597.6px;font-size:14.5px;line-height:18.9px;color:#333;font-weight:400;">19</div>
<div class="b" style="left:0px;top:637px;width:26px;height:1px;background:#cdcdcd"></div>
<div class="t " style="left:0.0px;width:26px;text-align:center;top:618.1px;font-size:14.5px;line-height:18.9px;color:#333;font-weight:400;">20</div>
<div class="b" style="left:0px;top:657px;width:26px;height:1px;background:#cdcdcd"></div>
<div class="t " style="left:0.0px;width:26px;text-align:center;top:638.6px;font-size:14.5px;line-height:18.9px;color:#333;font-weight:400;">21</div>
<div class="b" style="left:0px;top:678px;width:26px;height:1px;background:#cdcdcd"></div>
<div class="t " style="left:0.0px;width:26px;text-align:center;top:659.1px;font-size:14.5px;line-height:18.9px;color:#333;font-weight:400;">22</div>
<div class="b" style="left:63px;top:234px;width:743px;height:32px;background:#ccaae0"></div>
<div class="t " style="left:66px;top:243.6px;font-size:12.2px;line-height:15.9px;color:#111;font-weight:700;">GOAL</div>
<div class="t " style="left:326.0px;width:120px;text-align:center;top:243.6px;font-size:12.2px;line-height:15.9px;color:#111;font-weight:700;">TARGET</div>
<div class="t " style="left:398.0px;width:120px;text-align:center;top:243.6px;font-size:12.2px;line-height:15.9px;color:#111;font-weight:700;">ACTUAL</div>
<div class="t " style="left:483.0px;width:120px;text-align:center;top:243.6px;font-size:12.2px;line-height:15.9px;color:#111;font-weight:700;">DIFFERENCE</div>
<div class="t " style="left:578.0px;width:120px;text-align:center;top:243.6px;font-size:12.2px;line-height:15.9px;color:#111;font-weight:700;">STATUS</div>
<div class="t " style="left:689px;top:243.6px;font-size:12.2px;line-height:15.9px;color:#111;font-weight:700;">PROGRESS</div>
<div class="b" style="left:592px;top:266px;width:94px;height:21px;background:linear-gradient(90deg,#bcd5ec,#c6dcf0)"></div>
<div class="b" style="left:688px;top:267px;width:72.5px;height:17px;background:linear-gradient(90deg,#d8bfe9,#dcc6ea)"></div>
<div class="b" style="left:63px;top:286px;width:528px;height:1px;background:#dcdcdc"></div>
<div class="b" style="left:591px;top:286px;width:95px;height:1px;background:#dfeaf5"></div>
<div class="b" style="left:686px;top:286px;width:120px;height:1px;background:#dcdcdc"></div>
<div class="t d" style="left:66px;top:268.3px;font-size:13.8px;line-height:17.9px;color:#222;font-weight:400;">Make a total of $2000 income</div>
<div class="t d" style="left:356.0px;width:60px;text-align:center;top:268.3px;font-size:13.8px;line-height:17.9px;color:#222;font-weight:400;">2000</div>
<div class="t d" style="left:428.0px;width:60px;text-align:center;top:268.3px;font-size:13.8px;line-height:17.9px;color:#222;font-weight:400;">1500</div>
<div class="t d" style="left:495.0px;width:96px;text-align:center;top:268.3px;font-size:13.8px;line-height:17.9px;color:#222;font-weight:400;">500</div>
<div class="t " style="left:592.0px;width:95px;text-align:center;top:268.5px;font-size:13.6px;line-height:17.7px;color:#000;font-weight:700;">Incomplete</div>
<div class="t d" style="left:689px;top:268.3px;font-size:13.8px;line-height:17.9px;color:#222;font-weight:400;">75%</div>
<div class="b" style="left:592px;top:287px;width:94px;height:20px;background:linear-gradient(90deg,#bcd5ec,#c6dcf0)"></div>
<div class="b" style="left:688px;top:288px;width:72.5px;height:16px;background:linear-gradient(90deg,#d8bfe9,#dcc6ea)"></div>
<div class="b" style="left:63px;top:306px;width:528px;height:1px;background:#dcdcdc"></div>
<div class="b" style="left:591px;top:306px;width:95px;height:1px;background:#dfeaf5"></div>
<div class="b" style="left:686px;top:306px;width:120px;height:1px;background:#dcdcdc"></div>
<div class="t d" style="left:66px;top:288.8px;font-size:13.8px;line-height:17.9px;color:#222;font-weight:400;">Read 4 Books</div>
<div class="t d" style="left:356.0px;width:60px;text-align:center;top:288.8px;font-size:13.8px;line-height:17.9px;color:#222;font-weight:400;">4</div>
<div class="t d" style="left:428.0px;width:60px;text-align:center;top:288.8px;font-size:13.8px;line-height:17.9px;color:#222;font-weight:400;">3</div>
<div class="t d" style="left:495.0px;width:96px;text-align:center;top:288.8px;font-size:13.8px;line-height:17.9px;color:#222;font-weight:400;">1</div>
<div class="t " style="left:592.0px;width:95px;text-align:center;top:289.0px;font-size:13.6px;line-height:17.7px;color:#000;font-weight:700;">Incomplete</div>
<div class="t d" style="left:689px;top:288.8px;font-size:13.8px;line-height:17.9px;color:#222;font-weight:400;">75%</div>
<div class="b" style="left:592px;top:307px;width:94px;height:21px;background:linear-gradient(90deg,#9cc0e5,#a9caea)"></div>
<div class="b" style="left:495px;top:307px;width:96px;height:21px;background:#e6d3ec"></div>
<div class="b" style="left:688px;top:308px;width:116.0px;height:17px;background:linear-gradient(90deg,#d8bfe9,#dcc6ea)"></div>
<div class="b" style="left:63px;top:327px;width:528px;height:1px;background:#dcdcdc"></div>
<div class="b" style="left:591px;top:327px;width:95px;height:1px;background:#dfeaf5"></div>
<div class="b" style="left:686px;top:327px;width:120px;height:1px;background:#dcdcdc"></div>
<div class="t d" style="left:66px;top:309.3px;font-size:13.8px;line-height:17.9px;color:#222;font-weight:400;">Write 10 Blog Posts</div>
<div class="t d" style="left:356.0px;width:60px;text-align:center;top:309.3px;font-size:13.8px;line-height:17.9px;color:#222;font-weight:400;">10</div>
<div class="t d" style="left:428.0px;width:60px;text-align:center;top:309.3px;font-size:13.8px;line-height:17.9px;color:#222;font-weight:400;">12</div>
<div class="t d" style="left:495.0px;width:96px;text-align:center;top:309.3px;font-size:13.8px;line-height:17.9px;color:#222;font-weight:400;">Above Target</div>
<div class="t d" style="left:591.5px;width:95px;text-align:center;top:308.4px;font-size:14px;line-height:18.2px;color:#1a2a4a;font-weight:400;letter-spacing:-0.2px">Completed</div>
<div class="t d" style="left:689px;top:309.3px;font-size:13.8px;line-height:17.9px;color:#222;font-weight:400;">120%</div>
<div class="b" style="left:592px;top:328px;width:94px;height:21px;background:linear-gradient(90deg,#9cc0e5,#a9caea)"></div>
<div class="b" style="left:688px;top:329px;width:96.66666666666667px;height:17px;background:linear-gradient(90deg,#d8bfe9,#dcc6ea)"></div>
<div class="b" style="left:63px;top:348px;width:528px;height:1px;background:#dcdcdc"></div>
<div class="b" style="left:591px;top:348px;width:95px;height:1px;background:#dfeaf5"></div>
<div class="b" style="left:686px;top:348px;width:120px;height:1px;background:#dcdcdc"></div>
<div class="t d" style="left:66px;top:330.3px;font-size:13.8px;line-height:17.9px;color:#222;font-weight:400;">Apply for a Job to 10 companies</div>
<div class="t d" style="left:356.0px;width:60px;text-align:center;top:330.3px;font-size:13.8px;line-height:17.9px;color:#222;font-weight:400;">10</div>
<div class="t d" style="left:428.0px;width:60px;text-align:center;top:330.3px;font-size:13.8px;line-height:17.9px;color:#222;font-weight:400;">10</div>
<div class="t d" style="left:495.0px;width:96px;text-align:center;top:330.3px;font-size:13.8px;line-height:17.9px;color:#222;font-weight:400;">0</div>
<div class="t d" style="left:591.5px;width:95px;text-align:center;top:329.4px;font-size:14px;line-height:18.2px;color:#1a2a4a;font-weight:400;letter-spacing:-0.2px">Completed</div>
<div class="t d" style="left:689px;top:330.3px;font-size:13.8px;line-height:17.9px;color:#222;font-weight:400;">100%</div>
<div class="b" style="left:592px;top:349px;width:94px;height:20px;background:linear-gradient(90deg,#bcd5ec,#c6dcf0)"></div>
<div class="b" style="left:688px;top:350px;width:72.5px;height:16px;background:linear-gradient(90deg,#d8bfe9,#dcc6ea)"></div>
<div class="b" style="left:63px;top:368px;width:528px;height:1px;background:#dcdcdc"></div>
<div class="b" style="left:591px;top:368px;width:95px;height:1px;background:#dfeaf5"></div>
<div class="b" style="left:686px;top:368px;width:120px;height:1px;background:#dcdcdc"></div>
<div class="t d" style="left:66px;top:350.8px;font-size:13.8px;line-height:17.9px;color:#222;font-weight:400;">Make 4 Youtube Videos</div>
<div class="t d" style="left:356.0px;width:60px;text-align:center;top:350.8px;font-size:13.8px;line-height:17.9px;color:#222;font-weight:400;">4</div>
<div class="t d" style="left:428.0px;width:60px;text-align:center;top:350.8px;font-size:13.8px;line-height:17.9px;color:#222;font-weight:400;">3</div>
<div class="t d" style="left:495.0px;width:96px;text-align:center;top:350.8px;font-size:13.8px;line-height:17.9px;color:#222;font-weight:400;">1</div>
<div class="t " style="left:592.0px;width:95px;text-align:center;top:351.0px;font-size:13.6px;line-height:17.7px;color:#000;font-weight:700;">Incomplete</div>
<div class="t d" style="left:689px;top:350.8px;font-size:13.8px;line-height:17.9px;color:#222;font-weight:400;">75%</div>
<div class="b" style="left:592px;top:369px;width:94px;height:21px;background:linear-gradient(90deg,#9cc0e5,#a9caea)"></div>
<div class="b" style="left:688px;top:370px;width:96.66666666666667px;height:17px;background:linear-gradient(90deg,#d8bfe9,#dcc6ea)"></div>
<div class="b" style="left:63px;top:389px;width:528px;height:1px;background:#dcdcdc"></div>
<div class="b" style="left:591px;top:389px;width:95px;height:1px;background:#dfeaf5"></div>
<div class="b" style="left:686px;top:389px;width:120px;height:1px;background:#dcdcdc"></div>
<div class="t d" style="left:66px;top:371.3px;font-size:13.8px;line-height:17.9px;color:#222;font-weight:400;">Add 2 Data Analytics Projects to my portfolio</div>
<div class="t d" style="left:356.0px;width:60px;text-align:center;top:371.3px;font-size:13.8px;line-height:17.9px;color:#222;font-weight:400;">2</div>
<div class="t d" style="left:428.0px;width:60px;text-align:center;top:371.3px;font-size:13.8px;line-height:17.9px;color:#222;font-weight:400;">2</div>
<div class="t d" style="left:495.0px;width:96px;text-align:center;top:371.3px;font-size:13.8px;line-height:17.9px;color:#222;font-weight:400;">0</div>
<div class="t d" style="left:591.5px;width:95px;text-align:center;top:370.4px;font-size:14px;line-height:18.2px;color:#1a2a4a;font-weight:400;letter-spacing:-0.2px">Completed</div>
<div class="t d" style="left:689px;top:371.3px;font-size:13.8px;line-height:17.9px;color:#222;font-weight:400;">100%</div>
<div class="b" style="left:592px;top:390px;width:94px;height:21px;background:linear-gradient(90deg,#9cc0e5,#a9caea)"></div>
<div class="b" style="left:495px;top:390px;width:96px;height:21px;background:#e6d3ec"></div>
<div class="b" style="left:688px;top:391px;width:116.0px;height:17px;background:linear-gradient(90deg,#d8bfe9,#dcc6ea)"></div>
<div class="b" style="left:63px;top:410px;width:528px;height:1px;background:#dcdcdc"></div>
<div class="b" style="left:591px;top:410px;width:95px;height:1px;background:#dfeaf5"></div>
<div class="b" style="left:686px;top:410px;width:120px;height:1px;background:#dcdcdc"></div>
<div class="t d" style="left:66px;top:392.3px;font-size:13.8px;line-height:17.9px;color:#222;font-weight:400;">Visit 5 Extended family members</div>
<div class="t d" style="left:356.0px;width:60px;text-align:center;top:392.3px;font-size:13.8px;line-height:17.9px;color:#222;font-weight:400;">5</div>
<div class="t d" style="left:428.0px;width:60px;text-align:center;top:392.3px;font-size:13.8px;line-height:17.9px;color:#222;font-weight:400;">6</div>
<div class="t d" style="left:495.0px;width:96px;text-align:center;top:392.3px;font-size:13.8px;line-height:17.9px;color:#222;font-weight:400;">Above Target</div>
<div class="t d" style="left:591.5px;width:95px;text-align:center;top:391.4px;font-size:14px;line-height:18.2px;color:#1a2a4a;font-weight:400;letter-spacing:-0.2px">Completed</div>
<div class="t d" style="left:689px;top:392.3px;font-size:13.8px;line-height:17.9px;color:#222;font-weight:400;">120%</div>
<div class="b" style="left:592px;top:411px;width:94px;height:20px;background:linear-gradient(90deg,#bcd5ec,#c6dcf0)"></div>
<div class="b" style="left:688px;top:412px;width:87.0px;height:16px;background:linear-gradient(90deg,#d8bfe9,#dcc6ea)"></div>
<div class="b" style="left:63px;top:430px;width:528px;height:1px;background:#dcdcdc"></div>
<div class="b" style="left:591px;top:430px;width:95px;height:1px;background:#dfeaf5"></div>
<div class="b" style="left:686px;top:430px;width:120px;height:1px;background:#dcdcdc"></div>
<div class="t d" style="left:66px;top:412.8px;font-size:13.8px;line-height:17.9px;color:#222;font-weight:400;">Make 10 Youtube shorts</div>
<div class="t d" style="left:356.0px;width:60px;text-align:center;top:412.8px;font-size:13.8px;line-height:17.9px;color:#222;font-weight:400;">10</div>
<div class="t d" style="left:428.0px;width:60px;text-align:center;top:412.8px;font-size:13.8px;line-height:17.9px;color:#222;font-weight:400;">9</div>
<div class="t d" style="left:495.0px;width:96px;text-align:center;top:412.8px;font-size:13.8px;line-height:17.9px;color:#222;font-weight:400;">1</div>
<div class="t " style="left:592.0px;width:95px;text-align:center;top:413.0px;font-size:13.6px;line-height:17.7px;color:#000;font-weight:700;">Incomplete</div>
<div class="t d" style="left:689px;top:412.8px;font-size:13.8px;line-height:17.9px;color:#222;font-weight:400;">90%</div>
<div class="b" style="left:592px;top:431px;width:94px;height:21px;background:linear-gradient(90deg,#9cc0e5,#a9caea)"></div>
<div class="b" style="left:688px;top:432px;width:96.66666666666667px;height:17px;background:linear-gradient(90deg,#d8bfe9,#dcc6ea)"></div>
<div class="b" style="left:63px;top:451px;width:528px;height:1px;background:#dcdcdc"></div>
<div class="b" style="left:591px;top:451px;width:95px;height:1px;background:#dfeaf5"></div>
<div class="b" style="left:686px;top:451px;width:120px;height:1px;background:#dcdcdc"></div>
<div class="t d" style="left:66px;top:433.3px;font-size:13.8px;line-height:17.9px;color:#222;font-weight:400;">Make 20 Tiktoks</div>
<div class="t d" style="left:356.0px;width:60px;text-align:center;top:433.3px;font-size:13.8px;line-height:17.9px;color:#222;font-weight:400;">20</div>
<div class="t d" style="left:428.0px;width:60px;text-align:center;top:433.3px;font-size:13.8px;line-height:17.9px;color:#222;font-weight:400;">20</div>
<div class="t d" style="left:495.0px;width:96px;text-align:center;top:433.3px;font-size:13.8px;line-height:17.9px;color:#222;font-weight:400;">0</div>
<div class="t d" style="left:591.5px;width:95px;text-align:center;top:432.4px;font-size:14px;line-height:18.2px;color:#1a2a4a;font-weight:400;letter-spacing:-0.2px">Completed</div>
<div class="t d" style="left:689px;top:433.3px;font-size:13.8px;line-height:17.9px;color:#222;font-weight:400;">100%</div>
<div class="b" style="left:63px;top:266px;width:1px;height:185px;background:#d9d9d9"></div>
<div class="b" style="left:351px;top:266px;width:1px;height:185px;background:#d9d9d9"></div>
<div class="b" style="left:421px;top:266px;width:1px;height:185px;background:#d9d9d9"></div>
<div class="b" style="left:494px;top:266px;width:1px;height:185px;background:#d9d9d9"></div>
<div class="b" style="left:591px;top:266px;width:1px;height:185px;background:#d9d9d9"></div>
<div class="b" style="left:686px;top:266px;width:1px;height:185px;background:#d9d9d9"></div>
<div class="b" style="left:805px;top:266px;width:1px;height:185px;background:#d9d9d9"></div>
<div class="b" style="left:63px;top:451px;width:743px;height:1px;background:#a6a6a6"></div>
<div class="b" style="left:802px;top:448px;width:4px;height:4px;background:#2f5fb0;clip-path:polygon(100% 0,100% 100%,0 100%)"></div>
<div class="b" style="left:846px;top:234px;width:319px;height:32px;background:#ccaae0"></div>
<div class="t " style="left:849px;top:243.6px;font-size:12.2px;line-height:15.9px;color:#111;font-weight:700;">MONTHLY GOALS</div>
<div class="t " style="left:1005.0px;width:60px;text-align:center;top:243.6px;font-size:12.2px;line-height:15.9px;color:#111;font-weight:700;">TOTAL</div>
<div class="t " style="left:1066.0px;width:98px;text-align:center;top:243.6px;font-size:12.2px;line-height:15.9px;color:#111;font-weight:700;">PROGRESS</div>
<div class="b" style="left:1067px;top:267px;width:96px;height:17px;background:#bad5ee"></div>
<div class="b" style="left:846px;top:286px;width:318px;height:1px;background:#dcdcdc"></div>
<div class="t d" style="left:849px;top:268.3px;font-size:13.8px;line-height:17.9px;color:#222;font-weight:400;">Goals Completed</div>
<div class="t d" style="left:1005.0px;width:60px;text-align:center;top:268.3px;font-size:13.8px;line-height:17.9px;color:#222;font-weight:400;">5</div>
<div class="t d" style="left:1068px;top:268.3px;font-size:13.8px;line-height:17.9px;color:#222;font-weight:400;">56%</div>
<div class="b" style="left:1067px;top:288px;width:38.5px;height:16px;background:#bad5ee"></div>
<div class="b" style="left:846px;top:306px;width:318px;height:1px;background:#dcdcdc"></div>
<div class="t d" style="left:849px;top:288.8px;font-size:13.8px;line-height:17.9px;color:#222;font-weight:400;">Goals Above Target</div>
<div class="t d" style="left:1005.0px;width:60px;text-align:center;top:288.8px;font-size:13.8px;line-height:17.9px;color:#222;font-weight:400;">2</div>
<div class="t d" style="left:1068px;top:288.8px;font-size:13.8px;line-height:17.9px;color:#222;font-weight:400;">22%</div>
<div class="b" style="left:1067px;top:308px;width:76.5px;height:17px;background:#bad5ee"></div>
<div class="b" style="left:846px;top:327px;width:318px;height:1px;background:#dcdcdc"></div>
<div class="t d" style="left:849px;top:309.3px;font-size:13.8px;line-height:17.9px;color:#222;font-weight:400;">Goals Not Completed</div>
<div class="t d" style="left:1005.0px;width:60px;text-align:center;top:309.3px;font-size:13.8px;line-height:17.9px;color:#222;font-weight:400;">4</div>
<div class="t d" style="left:1068px;top:309.3px;font-size:13.8px;line-height:17.9px;color:#222;font-weight:400;">44%</div>
<div class="b" style="left:846px;top:266px;width:1px;height:62px;background:#d9d9d9"></div>
<div class="b" style="left:1004px;top:266px;width:1px;height:62px;background:#d9d9d9"></div>
<div class="b" style="left:1066px;top:266px;width:1px;height:62px;background:#d9d9d9"></div>
<div class="b" style="left:1164px;top:266px;width:1px;height:62px;background:#d9d9d9"></div>
<div class="b" style="left:1161px;top:324px;width:4px;height:4px;background:#2f5fb0;clip-path:polygon(100% 0,100% 100%,0 100%)"></div>
<svg class="b" style="left:0;top:0" width="1280" height="720"><path d="M1007.00 390.00 A100 100 0 1 1 972.80 583.97 L983.06 555.78 A70 70 0 1 0 1007.00 420.00 Z" fill="#c9a6e2"/><path d="M972.80 583.97 A100 100 0 0 1 1007.00 390.00 L1007.00 420.00 A70 70 0 0 0 983.06 555.78 Z" fill="#f0f0f0"/></svg>
<div class="t " style="left:904.0px;width:200px;text-align:center;top:369.4px;font-size:12.4px;line-height:16.1px;color:#222;font-weight:400;">MONTHLY PROGRESS</div>
<div class="b" style="left:960px;top:596px;width:6px;height:6px;background:#c9a6e2"></div>
<div class="t " style="left:969px;top:592.9px;font-size:11px;line-height:14.3px;color:#555;font-weight:400;">Goals Completed</div>
<div class="b" style="left:1261px;top:194px;width:19px;height:478px;background:#e6e6e6"></div>
<div class="b" style="left:1263px;top:196px;width:14px;height:14px;background:#fff;border:1px solid #c8c8c8"></div>
<svg class="b" style="left:1265px;top:199px;" width="10" height="8" viewBox="0 0 10 8"><path d="M1 6 L5 2 L9 6 Z" fill="#555"/></svg>
<div class="b" style="left:1263px;top:210px;width:14px;height:428px;background:#fff;border:1px solid #c8c8c8;border-top:none"></div>
<div class="b" style="left:1263px;top:638px;width:14px;height:21px;background:#dadada"></div>
<div class="b" style="left:1263px;top:659px;width:14px;height:13px;background:#fff;border:1px solid #c8c8c8"></div>
<svg class="b" style="left:1265px;top:662px;" width="10" height="8" viewBox="0 0 10 8"><path d="M1 2 L5 6 L9 2 Z" fill="#555"/></svg>
<div class="b" style="left:1260px;top:213px;width:1px;height:459px;background:#b4b4b4"></div>
<div class="b" style="left:0px;top:672px;width:1280px;height:26px;background:#e6e6e6"></div>
<div class="b" style="left:0px;top:672px;width:1280px;height:1px;background:#ababab"></div>
<svg class="b" style="left:24px;top:680px;" width="6" height="10" viewBox="0 0 6 10"><path d="M5 1 L1 5 L5 9 Z" fill="#c8c8c8"/></svg>
<svg class="b" style="left:51px;top:680px;" width="6" height="10" viewBox="0 0 6 10"><path d="M1 1 L5 5 L1 9 Z" fill="#c8c8c8"/></svg>
<div class="b" style="left:94px;top:675px;width:1px;height:20px;background:#b8b8b8"></div>
<div class="t " style="left:90.5px;width:50px;text-align:center;top:676.9px;font-size:12.5px;line-height:16.2px;color:#444;font-weight:400;">Jan</div>
<div class="b" style="left:137px;top:675px;width:1px;height:20px;background:#b8b8b8"></div>
<div class="t " style="left:133.5px;width:50px;text-align:center;top:676.9px;font-size:12.5px;line-height:16.2px;color:#444;font-weight:400;">Feb</div>
<div class="b" style="left:180px;top:675px;width:1px;height:20px;background:#b8b8b8"></div>
<div class="t " style="left:177.0px;width:50px;text-align:center;top:676.9px;font-size:12.5px;line-height:16.2px;color:#444;font-weight:400;">Mar</div>
<div class="b" style="left:224px;top:672px;width:43px;height:25px;background:#fff"></div>
<div class="b" style="left:224px;top:694px;width:43px;height:2px;background:#217346"></div>
<div class="t " style="left:220.5px;width:50px;text-align:center;top:676.9px;font-size:12.5px;line-height:16.2px;color:#217346;font-weight:700;">Apr</div>
<div class="t " style="left:265.0px;width:50px;text-align:center;top:676.9px;font-size:12.5px;line-height:16.2px;color:#444;font-weight:400;">May</div>
<div class="b" style="left:313px;top:675px;width:1px;height:20px;background:#b8b8b8"></div>
<div class="t " style="left:310.0px;width:50px;text-align:center;top:676.9px;font-size:12.5px;line-height:16.2px;color:#444;font-weight:400;">Jun</div>
<div class="b" style="left:357px;top:675px;width:1px;height:20px;background:#b8b8b8"></div>
<div class="t " style="left:352.0px;width:50px;text-align:center;top:676.9px;font-size:12.5px;line-height:16.2px;color:#444;font-weight:400;">Jul</div>
<div class="b" style="left:397px;top:675px;width:1px;height:20px;background:#b8b8b8"></div>
<div class="t " style="left:394.5px;width:50px;text-align:center;top:676.9px;font-size:12.5px;line-height:16.2px;color:#444;font-weight:400;">Aug</div>
<div class="b" style="left:442px;top:675px;width:1px;height:20px;background:#b8b8b8"></div>
<div class="t " style="left:438.5px;width:50px;text-align:center;top:676.9px;font-size:12.5px;line-height:16.2px;color:#444;font-weight:400;">Sep</div>
<div class="b" style="left:485px;top:675px;width:1px;height:20px;background:#b8b8b8"></div>
<div class="t " style="left:481.0px;width:50px;text-align:center;top:676.9px;font-size:12.5px;line-height:16.2px;color:#444;font-weight:400;">Oct</div>
<div class="b" style="left:527px;top:675px;width:1px;height:20px;background:#b8b8b8"></div>
<div class="t " style="left:525.0px;width:50px;text-align:center;top:676.9px;font-size:12.5px;line-height:16.2px;color:#444;font-weight:400;">Nov</div>
<div class="b" style="left:573px;top:675px;width:1px;height:20px;background:#b8b8b8"></div>
<div class="t " style="left:570.0px;width:50px;text-align:center;top:676.9px;font-size:12.5px;line-height:16.2px;color:#444;font-weight:400;">Dec</div>
<div class="b" style="left:617px;top:675px;width:1px;height:20px;background:#b8b8b8"></div>
<svg class="b" style="left:648px;top:676px;" width="18" height="18" viewBox="0 0 18 18"><circle cx="9" cy="9" r="7.3" fill="none" stroke="#666" stroke-width="1.2"/><path d="M9 5 V13 M5 9 H13" stroke="#666" stroke-width="1.5"/></svg>
<svg class="b" style="left:767px;top:677px;" width="3" height="14" viewBox="0 0 3 14"><circle cx="1.5" cy="2" r="0.6" fill="#999"/><circle cx="1.5" cy="5" r="0.6" fill="#999"/><circle cx="1.5" cy="8" r="0.6" fill="#999"/><circle cx="1.5" cy="11" r="0.6" fill="#999"/></svg>
<div class="b" style="left:783px;top:678px;width:478px;height:15px;background:#e0e0e0;border:1px solid #c8c8c8"></div>
<div class="b" style="left:784px;top:679px;width:13px;height:13px;background:#fff;border-right:1px solid #c8c8c8"></div>
<svg class="b" style="left:787px;top:681px;" width="7" height="9" viewBox="0 0 7 9"><path d="M6 1 L2 4.5 L6 8 Z" fill="#555"/></svg>
<div class="b" style="left:797px;top:679px;width:383px;height:13px;background:#fff"></div>
<div class="b" style="left:1247px;top:679px;width:13px;height:13px;background:#fff;border-left:1px solid #c8c8c8"></div>
<svg class="b" style="left:1250px;top:681px;" width="7" height="9" viewBox="0 0 7 9"><path d="M1 1 L5 4.5 L1 8 Z" fill="#555"/></svg>
<div class="b" style="left:0px;top:698px;width:1280px;height:22px;background:#f3f3f3"></div>
<div class="b" style="left:0px;top:698px;width:1280px;height:1px;background:#d6d6d6"></div>
<div class="t " style="left:7px;top:702.7px;font-size:10.4px;line-height:13.5px;color:#444;font-weight:400;">Ready</div>
<svg class="b" style="left:53px;top:702px;" width="16" height="14" viewBox="0 0 16 14"><rect x="1" y="1" width="13" height="11" fill="none" stroke="#555" stroke-width="1.1"/><path d="M1 4 H14 M3 7 H6 M3 9.5 H6" stroke="#555" stroke-width="1"/><circle cx="10.5" cy="9" r="2.5" fill="#fff" stroke="#555" stroke-width="1.1"/></svg>
<svg class="b" style="left:82px;top:701px;" width="17" height="16" viewBox="0 0 17 16"><path d="M6 3 Q2 4 2 8.5 Q2 13 7 14" fill="none" stroke="#555" stroke-width="1.1"/><path d="M8 1 V7 M6 5 L8 7 L10 5" fill="none" stroke="#555" stroke-width="1.1"/><path d="M10 9 L15 15 M15 9 L10 15" stroke="#555" stroke-width="1.1"/></svg>
<div class="t " style="left:101px;top:702.1px;font-size:10.6px;line-height:13.8px;color:#444;font-weight:400;">Accessibility: Investigate</div>
<div class="b" style="left:999px;top:698px;width:37px;height:21px;background:#dcdcdc"></div>
<svg class="b" style="left:1009px;top:701px;" width="16" height="15" viewBox="0 0 16 15"><rect x="1" y="1" width="13" height="13" fill="none" stroke="#444" stroke-width="1.1"/><path d="M5.3 1 V14 M9.6 1 V14 M1 5.3 H14 M1 9.6 H14" stroke="#444" stroke-width="1"/></svg>
<svg class="b" style="left:1047px;top:701px;" width="16" height="15" viewBox="0 0 16 15"><rect x="1" y="1" width="13" height="13" fill="none" stroke="#555" stroke-width="1.1"/><rect x="3.5" y="3.5" width="8" height="8" fill="none" stroke="#555" stroke-width="1"/><path d="M5.5 6 H9.5 M5.5 8 H9.5" stroke="#555" stroke-width="0.9"/></svg>
<svg class="b" style="left:1084px;top:701px;" width="16" height="15" viewBox="0 0 16 15"><rect x="1" y="1" width="13" height="13" fill="none" stroke="#555" stroke-width="1.1"/><path d="M5 1 V8.5 H14 M9.5 1 V8.5" fill="none" stroke="#555" stroke-width="1"/></svg>
<div class="b" style="left:1117px;top:708px;width:7px;height:1.3px;background:#555"></div>
<div class="b" style="left:1130px;top:708px;width:93px;height:1px;background:#a8a8a8"></div>
<div class="b" style="left:1177px;top:704px;width:4px;height:10px;background:#666"></div>
<svg class="b" style="left:1228px;top:704px;" width="10" height="10" viewBox="0 0 10 10"><path d="M4.5 0.5 V9.5 M0.5 5 H8.5" stroke="#555" stroke-width="1"/></svg>
<div class="t " style="left:1248px;top:702.9px;font-size:10.2px;line-height:13.3px;color:#555;font-weight:400;">110%</div>
</body></html>
